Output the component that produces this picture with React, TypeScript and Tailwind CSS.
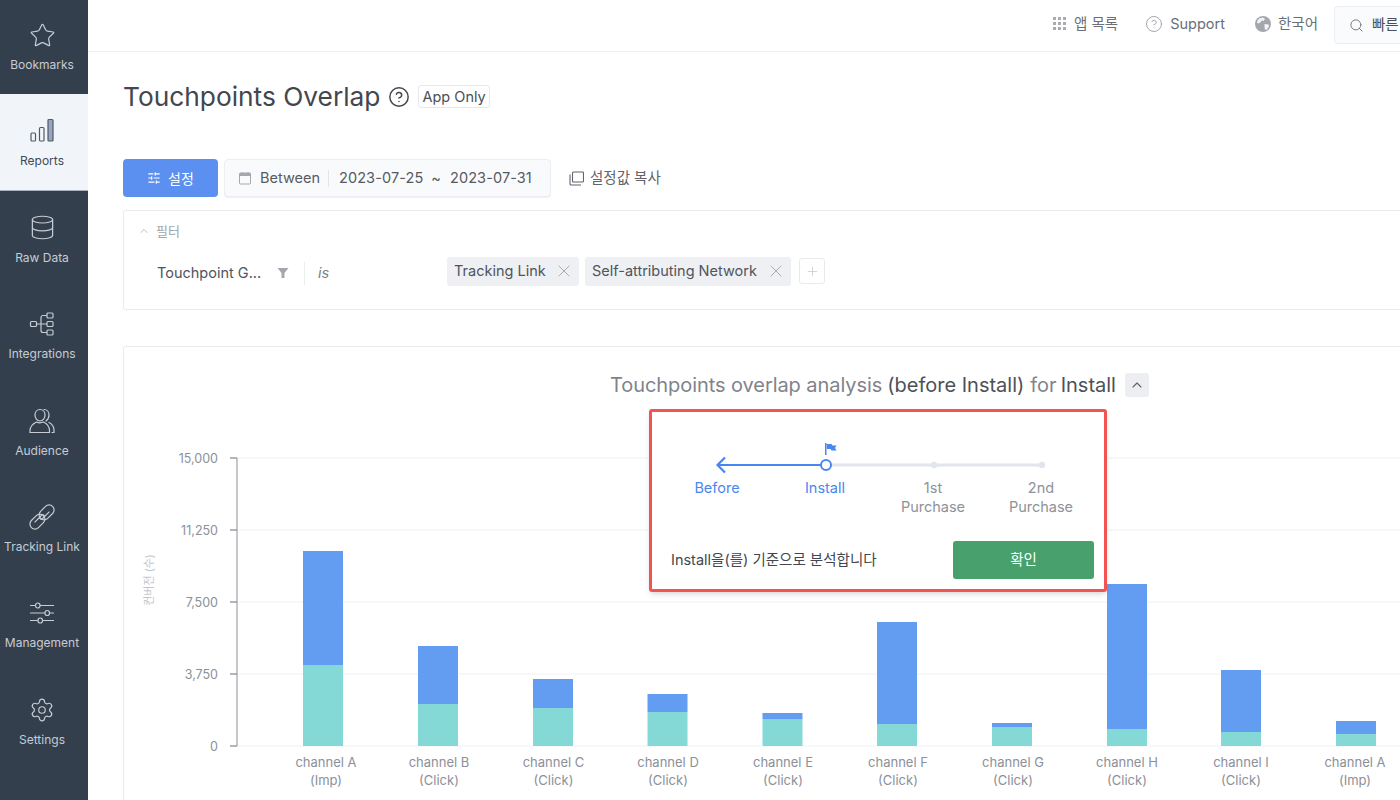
import React from "react";
import { ChevronUp, CircleHelp, Database, Search, Settings, SlidersHorizontal, Star, X, Plus } from "lucide-react";

const BarsIcon = () => (
    <svg width="26" height="26" viewBox="0 0 26 26" fill="none" stroke="#4d5a6b" strokeWidth="1.2">
        <rect x="2" y="15" width="4.500" height="8" rx="1" />
        <rect x="10.500" y="9.500" width="4.500" height="13.500" rx="1" />
        <rect x="19" y="1.500" width="5" height="21.500" rx="1" fill="#98a6bd" />
    </svg>
);

const IntegrationsIcon = () => (
    <svg width="26" height="26" viewBox="0 0 26 26" fill="none" stroke="#c5ccd4" strokeWidth="1.2">
        <rect x="1.500" y="10.500" width="6" height="5" rx="1" />
        <rect x="18" y="2" width="6" height="5" rx="1" />
        <rect x="18" y="10.500" width="6" height="5" rx="1" />
        <rect x="18" y="19" width="6" height="5" rx="1" />
        <path d="M7.500 13h10.500M12 13V6.500a2 2 0 0 1 2-2h4M12 13v6.500a2 2 0 0 0 2 2h4" />
    </svg>
);

const AudienceIcon = () => (
    <svg width="26" height="26" viewBox="0 0 26 26" fill="none" stroke="#c5ccd4" strokeWidth="1.2" strokeLinecap="round" strokeLinejoin="round">
        <path d="M6 7c0-3 2-5.500 5-5.500S16 4 16 7s-2 6-5 6-5-3-5-6z" />
        <path d="M1 24.500v-2c0-4 3.500-7 6.500-8.500 2 1 4.500 1 7 0 3 1.500 6 4.500 6 8.500v2z" />
        <path d="M15 1.500c3 0 5 2.500 5 5.500s-1.500 5-3 6M20 14.500c3 1.500 5 4 5 8v2h-2" />
    </svg>
);

const LinkIcon = () => (
    <svg width="26" height="26" viewBox="0 0 26 26" fill="none" stroke="#c5ccd4" strokeWidth="1.2">
        <g transform="rotate(-45 13 13)">
            <rect x="-2" y="8" width="17" height="10" rx="5" />
            <rect x="11" y="8" width="17" height="10" rx="5" />
            <path d="M4 11.500h10a1.500 1.500 0 0 1 0 3h-3M22 14.500H12a1.500 1.500 0 0 1 0-3h3" />
        </g>
    </svg>
);

const ManagementIcon = () => (
    <svg width="26" height="26" viewBox="0 0 26 26" fill="none" stroke="#c5ccd4" strokeWidth="1.2">
        <path d="M1 5.500h5.500M11 5.500h14M1 13h15M21 13h4M1 20.500h8M14 20.500h11" />
        <rect x="6.500" y="3" width="4.500" height="5" rx="2.200" />
        <rect x="16" y="10.500" width="4.500" height="5" rx="2.200" />
        <rect x="9" y="18" width="4.500" height="5" rx="2.200" />
    </svg>
);

const GlobeIcon = () => (
    <svg width="16" height="16" viewBox="0 0 16 16">
        <circle cx="8" cy="8" r="8" fill="#a4a8ae" />
        <path d="M4 2.500l4-1 2 1.500-1.500 2-2-.5-1 2L3 7.500 1.800 6zM9.500 8l4 .5.500 2-2.500 3.500-1.500-.500-.500-3z" fill="#f3f4f5" />
    </svg>
);

const CalendarIcon = () => (
    <svg width="14" height="14" viewBox="0 0 14 14" fill="none">
        <rect x="1.500" y="2" width="11" height="11" rx="1" stroke="#a4a8ae" />
        <rect x="1.500" y="2" width="11" height="3" fill="#a4a8ae" />
        <path d="M4 1v2M10 1v2" stroke="#a4a8ae" />
    </svg>
);

const CopyIcon = () => (
    <svg width="15" height="15" viewBox="0 0 15 15" fill="none" stroke="#5f646b" strokeWidth="1.100">
        <rect x="3.500" y="1" width="11" height="10" rx="1" />
        <path d="M1 3.500v9.500a1 1 0 0 0 1 1h10" />
    </svg>
);

const navItems = [
    { label: "Bookmarks", icon: <Star size={27} strokeWidth={1.1} color="#c5ccd4" /> },
    { label: "Reports", icon: <BarsIcon />, active: true },
    { label: "Raw Data", icon: <Database size={27} strokeWidth={1.1} color="#c5ccd4" /> },
    { label: "Integrations", icon: <IntegrationsIcon /> },
    { label: "Audience", icon: <AudienceIcon /> },
    { label: "Tracking Link", icon: <LinkIcon /> },
    { label: "Management", icon: <ManagementIcon /> },
    { label: "Settings", icon: <Settings size={26} strokeWidth={1.1} color="#c5ccd4" /> },
];

const bars = [
    { x: 303, cx: 326, top: 551, split: 665, name: "channel A", kind: "(Imp)" },
    { x: 418, cx: 439, top: 646, split: 704, name: "channel B", kind: "(Click)" },
    { x: 533, cx: 553.500, top: 679, split: 708, name: "channel C", kind: "(Click)" },
    { x: 647.500, cx: 668, top: 694, split: 712, name: "channel D", kind: "(Click)" },
    { x: 762.500, cx: 783, top: 713, split: 719, name: "channel E", kind: "(Click)" },
    { x: 877, cx: 898, top: 622, split: 724, name: "channel F", kind: "(Click)" },
    { x: 992, cx: 1013, top: 723, split: 727, name: "channel G", kind: "(Click)" },
    { x: 1107, cx: 1127, top: 584, split: 729, name: "channel H", kind: "(Click)" },
    { x: 1221, cx: 1241, top: 670, split: 732, name: "channel I", kind: "(Click)" },
    { x: 1336, cx: 1355, top: 721, split: 734, name: "channel A", kind: "(Imp)" },
];

const ticks = [
    { y: 458, label: "15,000" },
    { y: 530, label: "11,250" },
    { y: 602, label: "7,500" },
    { y: 674, label: "3,750" },
    { y: 746, label: "0" },
];

function Chart() {
    return (
        <svg width="1276" height="360" viewBox="124 440 1276 360" className="block">
            {ticks.map((t) => (
                <g key={t.y}>
                    <line x1="237" x2="1400" y1={t.y} y2={t.y} stroke="#f0f1f3" />
                    <line x1="230" x2="237" y1={t.y} y2={t.y} stroke="#666c75" />
                    <text x="218" y={t.y + 4.500} textAnchor="end" fontSize="12.500" fill="#8b9099">{t.label}</text>
                </g>
            ))}
            <line x1="237" x2="237" y1="458" y2="746" stroke="#8b8f96" />
            <text transform="translate(153 580) rotate(-90)" textAnchor="middle" fontSize="11" fill="#c3c7cd">컨버전 (수)</text>
            {bars.map((b) => (
                <g key={b.x}>
                    <rect x={b.x} y={b.top} width="40" height={b.split - b.top} fill="#629df2" />
                    <rect x={b.x} y={b.split} width="40" height={746 - b.split} fill="#84d9d6" />
                    <text x={b.cx} y="767" textAnchor="middle" fontSize="13" fill="#8b9099">{b.name}</text>
                    <text x={b.cx} y="785" textAnchor="middle" fontSize="13" fill="#8b9099">{b.kind}</text>
                </g>
            ))}
        </svg>
    );
}

function Timeline() {
    return (
        <svg width="432" height="41" viewBox="663 437 432 41" className="block">
            <line x1="826" x2="1042" y1="465" y2="465" stroke="#e2e5ec" strokeWidth="3" />
            <circle cx="934" cy="465" r="3.200" fill="#e2e5ec" />
            <circle cx="1042" cy="465" r="3.200" fill="#e2e5ec" />
            <path d="M717 465h104" stroke="#4a86f0" strokeWidth="2.200" />
            <path d="M725 457.500L717.500 465l7.500 7.500" fill="none" stroke="#4a86f0" strokeWidth="2.200" />
            <circle cx="826" cy="465" r="5" fill="#fff" stroke="#4a86f0" strokeWidth="2" />
            <path d="M825 443h1.500v12H825z" fill="#4a86f0" />
            <path d="M826.500 444h5l1 1.500h4l-1.500 2.500 1.500 2.500h-5l-1-1.500h-3.500z" fill="#4a86f0" />
        </svg>
    );
}

const steps = [
    { label: ["Before"], on: true },
    { label: ["Install"], on: true },
    { label: ["1st", "Purchase"], on: false },
    { label: ["2nd", "Purchase"], on: false },
];

export default function App() {
    return (
        <div className="flex h-[800px] w-[1400px] overflow-hidden bg-white text-[#4a4f57] font-['Inter','Noto_Sans_CJK_KR',sans-serif]">
            <aside className="h-full w-[88px] shrink-0 bg-[#343f4d]">
                <div className="-mt-[2px]">
                    {navItems.map((item) => (
                        <div
                            key={item.label}
                            className={item.active
                                ? "flex h-[96.4px] flex-col items-center border-b border-[#aab2bd] bg-[#f1f5f9] pr-[4px] pt-[24px] text-[#3f4a58]"
                                : "flex h-[96.4px] flex-col items-center pr-[4px] pt-[24px] text-[#c5ccd4]"}
                        >
                            <div className="flex h-[26px] items-center justify-center">{item.icon}</div>
                            <div className="mt-[9px] whitespace-nowrap text-[12px] leading-4">{item.label}</div>
                        </div>
                    ))}
                </div>
            </aside>

            <div className="flex h-full min-w-0 flex-1 flex-col overflow-hidden">
                <header className="flex h-[52px] shrink-0 items-center justify-end border-b border-[#ecedef] pb-[4px] text-[14.5px] text-[#6a6f77]">
                    <div className="flex items-center gap-[8px]">
                        <div className="grid grid-cols-3 gap-[2px]">
                            {[1, 2, 3, 4, 5, 6, 7, 8, 9].map((n) => <span key={n} className="h-[3px] w-[3px] bg-[#a9adb3]" />)}
                        </div>
                        <span>앱 목록</span>
                    </div>
                    <div className="ml-[27px] flex items-center gap-[7px]">
                        <CircleHelp size={18} strokeWidth={1.2} color="#9a9ea5" />
                        <span>Support</span>
                    </div>
                    <div className="ml-[30px] flex items-center gap-[7px]">
                        <GlobeIcon />
                        <span>한국어</span>
                    </div>
                    <div className="ml-[16px] mt-[3px] flex h-[38px] w-[66px] items-center gap-[8px] rounded-l border border-r-0 border-[#eceef1] bg-[#fafbfc] pl-[14px] text-[#4a4f57]">
                        <Search size={15} strokeWidth={1.6} color="#777c84" className="shrink-0" />
                        <span className="whitespace-nowrap">빠른</span>
                    </div>
                </header>

                <main className="w-[1340px] pl-[35px]">
                    <div className="mt-[26px] flex h-[38px] items-center">
                        <h1 className="text-[26.3px] font-normal leading-[38px] text-[#43474d]">Touchpoints Overlap</h1>
                        <CircleHelp size={22} strokeWidth={1.6} color="#43474d" className="ml-[8px]" />
                        <span className="ml-[8px] -translate-y-[1px] rounded-[3px] border border-[#e6e8ec] px-[3px] text-[14.5px] leading-[21px] text-[#4a4f57]">App Only</span>
                    </div>

                    <div className="mt-[43px] flex h-[38px] items-center">
                        <button className="flex h-[38px] w-[95px] items-center justify-center gap-[7px] rounded bg-[#5b8ff0] text-[14px] text-white">
                            <SlidersHorizontal size={14} strokeWidth={2} />
                            설정
                        </button>
                        <div className="ml-[6px] flex h-[38px] w-[327px] items-center rounded border border-[#eceef1] bg-[#f9fafb] pl-[13px] text-[14.5px] text-[#565b62] shadow-[0_1px_1px_rgba(0,0,0,0.06)]">
                            <CalendarIcon />
                            <span className="ml-[8px]">Between</span>
                            <span className="mx-[8px] h-[17px] w-px bg-[#e3e5e9]" />
                            <span className="ml-[2px] tracking-[0.1px]">2023-07-25</span>
                            <span className="ml-[8px]">~</span>
                            <span className="ml-[9px] tracking-[0.1px]">2023-07-31</span>
                        </div>
                        <div className="ml-[18px] flex items-center gap-[6px] text-[14.5px] text-[#5f646b]">
                            <CopyIcon />
                            <span>설정값 복사</span>
                        </div>
                    </div>

                    <section className="mt-[13px] h-[100px] rounded-[3px] border border-[#e8eaed]">
                        <div className="mt-[11px] flex items-center pl-[14px] text-[13px] leading-[18px] text-[#a0a5ad]">
                            <ChevronUp size={12} strokeWidth={1.5} />
                            <span className="ml-[6px]">필터</span>
                        </div>
                        <div className="mt-[18px] flex h-[30px] items-center text-[14.5px] text-[#50555c]">
                            <span className="ml-[33px] w-[118px] whitespace-nowrap">Touchpoint G...</span>
                            <svg width="12" height="12" viewBox="0 0 12 12" className="ml-[2px]"><path d="M0.500 1h11L7.500 6v5h-3V6z" fill="#a4a8ae" /></svg>
                            <span className="ml-[15px] h-[23px] w-px bg-[#ebedf0]" />
                            <span className="ml-[13px] w-[129px] italic text-[#7b8087]">is</span>
                            <div className="flex h-[29px] w-[132px] -translate-y-[2px] items-center justify-between rounded-[3px] bg-[#eef0f3] pl-[7px] pr-[5px]">
                                <span className="whitespace-nowrap">Tracking Link</span>
                                <X size={20} strokeWidth={1} color="#9a9ea5" />
                            </div>
                            <div className="ml-[6px] flex h-[29px] w-[206px] -translate-y-[2px] items-center justify-between rounded-[3px] bg-[#eef0f3] pl-[7px] pr-[5px]">
                                <span className="whitespace-nowrap">Self-attributing Network</span>
                                <X size={20} strokeWidth={1} color="#9a9ea5" />
                            </div>
                            <div className="ml-[8px] flex h-[26px] w-[26px] -translate-y-[2px] items-center justify-center rounded-[3px] border border-[#e8eaed]">
                                <Plus size={15} strokeWidth={1.2} color="#c6c9ce" />
                            </div>
                        </div>
                    </section>

                    <section className="relative mt-[36px] h-[500px] rounded-[3px] border border-[#e8eaed]">
                        <div className="mt-[25px] flex h-[26px] items-center pl-[486px] text-[20px] text-[#7f848b]">
                            <span className="tracking-[-0.07px]">Touchpoints overlap analysis</span>
                            <span className="ml-[5px] text-[#4d5157]">(before Install)</span>
                            <span className="ml-[6px]">for</span>
                            <span className="ml-[4px] text-[#4d5157]">Install</span>
                            <span className="ml-[9px] flex h-[24px] w-[24px] items-center justify-center rounded-[3px] bg-[#eceef1]">
                                <ChevronUp size={16} strokeWidth={1.6} color="#5f646b" />
                            </span>
                        </div>
                        <div className="mt-[42px]">
                            <Chart />
                        </div>

                        <div className="absolute left-[525px] top-[62px] h-[183px] w-[458px] rounded-[3px] border-[3px] border-[#f25353] bg-white shadow-md">
                            <div className="pl-[11px] pt-[25px]">
                                <Timeline />
                                <div className="grid w-[432px] grid-cols-4 text-center text-[14.5px] leading-[19px]">
                                    {steps.map((s) => (
                                        <div key={s.label[0]} className={s.on ? "text-[#4a86f0]" : "text-[#8e9299]"}>
                                            {s.label.map((line) => <div key={line}>{line}</div>)}
                                        </div>
                                    ))}
                                </div>
                            </div>
                            <div className="absolute bottom-[10px] left-[19px] right-[10px] flex items-center justify-between">
                                <span className="text-[14.5px] text-[#43474d]">Install을(를) 기준으로 분석합니다</span>
                                <button className="h-[38px] w-[141px] rounded-[3px] bg-[#48a06c] text-[14.5px] text-white">확인</button>
                            </div>
                        </div>
                    </section>
                </main>
            </div>
        </div>
    );
}
